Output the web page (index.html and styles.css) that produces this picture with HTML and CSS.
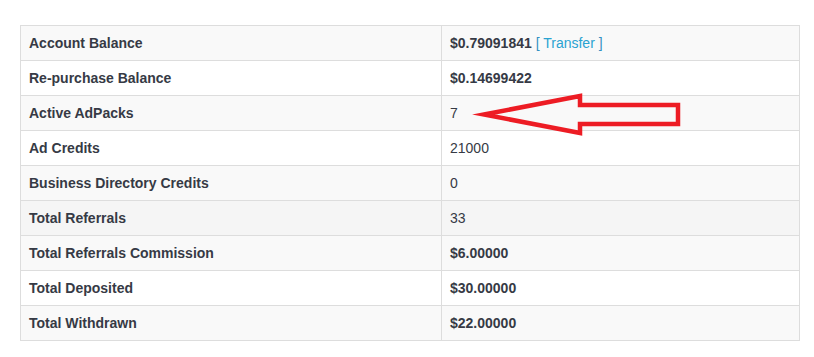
FILE: index.html
```html
<!DOCTYPE html>
<html>
<head>
<meta charset="utf-8">
<link rel="stylesheet" href="styles.css">
</head>
<body>
<div class="wrap">
  <table class="stats">
    <colgroup><col class="c1"><col class="c2"></colgroup>
    <tbody>
      <tr><th>Account Balance</th><td><b>$0.79091841</b> <a class="link" href="#"><span class="br">[</span> Transfer <span class="br">]</span></a></td></tr>
      <tr><th>Re-purchase Balance</th><td><b>$0.14699422</b></td></tr>
      <tr><th>Active AdPacks</th><td>7</td></tr>
      <tr><th>Ad Credits</th><td>21000</td></tr>
      <tr><th>Business Directory Credits</th><td>0</td></tr>
      <tr class="hover"><th>Total Referrals</th><td class="ref">33</td></tr>
      <tr><th>Total Referrals Commission</th><td><b>$6.00000</b></td></tr>
      <tr><th>Total Deposited</th><td><b>$30.00000</b></td></tr>
      <tr><th>Total Withdrawn</th><td><b>$22.00000</b></td></tr>
    </tbody>
  </table>
  <svg class="arrow" width="220" height="60" viewBox="0 0 220 60">
    <path d="M14 29.5 L110 11 L110 20 L208 20 L208 39 L110 39 L110 48 Z" fill="none" stroke="#ed1c24" stroke-width="4.5" stroke-linejoin="miter" stroke-miterlimit="20"/>
  </svg>
</div>
</body>
</html>
```
FILE: styles.css
```css
html, body {
  margin: 0;
  padding: 0;
  background: #fff;
}
body {
  font-family: "Liberation Sans", Arial, sans-serif;
  font-size: 14px;
  color: #333;
}
.wrap {
  position: relative;
  padding: 25px 0 0 20px;
}
.stats {
  border-collapse: collapse;
  table-layout: fixed;
  width: 780px;
  border: 1px solid #ddd;
}
.c1 { width: 421px; }
.stats th,
.stats td {
  border-top: 1px solid #ddd;
  border-left: 1px solid #ddd;
  padding: 8px 8px;
  line-height: 18px;
  text-align: left;
  vertical-align: top;
}
.stats th {
  font-weight: bold;
  color: #363a45;
}
.stats td {
  color: #363a45;
}
.stats td b {
  font-weight: bold;
}
.stats tbody tr:nth-child(odd) {
  background: #f9f9f9;
}
.stats tbody tr.hover {
  background: #f5f5f5;
}
.ref { color: #3d4a5c; }
.stats td .link {
  color: #2aa3d1;
  text-decoration: none;
}
.link .br { color: #3590c2; }
.arrow {
  position: absolute;
  left: 470px;
  top: 85px;
}
```
